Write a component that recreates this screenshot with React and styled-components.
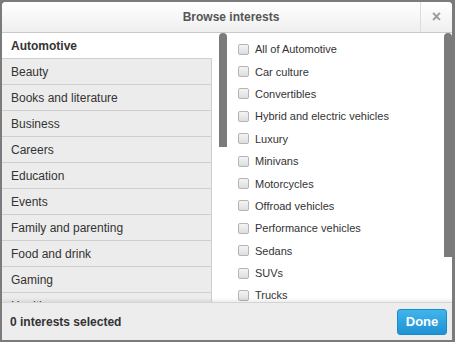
import React from 'react';
import styled, { createGlobalStyle } from 'styled-components';

const GlobalStyle = createGlobalStyle`
  html, body {
    margin: 0;
    padding: 0;
    background: #7b7b7b;
    font-family: "Liberation Sans", Arial, sans-serif;
  }
`;

const Page = styled.div`
  padding: 2px 3px 2px 2px;
  height: 342px;
  box-sizing: border-box;
`;

const Modal = styled.div`
  display: flex;
  flex-direction: column;
  height: 338px;
  background: #fff;
  border-radius: 4px 4px 0 0;
  overflow: hidden;
`;

const Header = styled.div`
  display: flex;
  height: 30px;
  flex-shrink: 0;
  background: linear-gradient(#ffffff, #efefef);
  border-bottom: 1px solid #c9c9c9;
`;

const Title = styled.div`
  flex: 1;
  display: flex;
  align-items: center;
  justify-content: center;
  padding-left: 40px;
  font-size: 12px;
  font-weight: bold;
  color: #555;
`;

const Close = styled.div`
  width: 31px;
  display: flex;
  align-items: center;
  justify-content: center;
  border-left: 1px solid #dcdcdc;
  color: #9a9a9a;
  font-size: 16px;
  font-weight: bold;
`;

const Body = styled.div`
  flex: 1;
  display: flex;
  overflow: hidden;
`;

const LeftCol = styled.div`
  display: flex;
  width: 225px;
`;

const CategoryList = styled.ul`
  list-style: none;
  margin: 0;
  padding: 0;
  width: 210px;
  border-right: 1px solid #cfcfcf;
  background: #ececec;
  align-self: flex-start;
`;

const Category = styled.li`
  height: 25px;
  display: flex;
  align-items: center;
  padding-left: 9px;
  font-size: 12px;
  color: #333;
  border-top: ${({ $first }) => ($first ? 'none' : '1px solid #cfcfcf')};
  background: ${({ $active }) => ($active ? '#fff' : '#ececec')};
  font-weight: ${({ $active }) => ($active ? 'bold' : 'normal')};
  margin-right: ${({ $active }) => ($active ? '-1px' : '0')};
`;

const Track = styled.div`
  width: 15px;
  display: flex;
  justify-content: flex-end;
`;

const Thumb = styled.div`
  width: 8px;
  height: ${({ $h }) => $h}px;
  background: #7b7b7b;
  border-radius: 4px 4px 0 0;
`;

const RightCol = styled.div`
  flex: 1;
  display: flex;
`;

const Options = styled.div`
  flex: 1;
  padding: 5px 0 0 11px;
`;

const Option = styled.label`
  display: flex;
  align-items: center;
  height: 22.4px;
  font-size: 11px;
  color: #333;
`;

const Box = styled.span`
  width: 9px;
  height: 9px;
  margin-right: 6px;
  border: 1px solid #b4b4b4;
  border-radius: 2px;
  background: linear-gradient(#f4f4f4, #dedede);
`;

const Footer = styled.div`
  height: 37px;
  flex-shrink: 0;
  display: flex;
  align-items: center;
  justify-content: space-between;
  padding: 0 5px 0 8px;
  background: #ededed;
  border-top: 1px solid #d4d4d4;
  box-shadow: 0 -2px 3px rgba(0, 0, 0, 0.08);
  position: relative;
`;

const Count = styled.div`
  font-size: 12px;
  font-weight: bold;
  color: #333;
`;

const Done = styled.button`
  width: 50px;
  height: 26px;
  border: 1px solid #1b8ccb;
  border-radius: 3px;
  background: linear-gradient(#40b5ec, #1f92d4);
  color: #fff;
  font-family: inherit;
  font-size: 13px;
  font-weight: bold;
  padding: 0;
`;

const categories = [
  'Automotive', 'Beauty', 'Books and literature', 'Business', 'Careers',
  'Education', 'Events', 'Family and parenting', 'Food and drink', 'Gaming', 'Health',
];

const options = [
  'All of Automotive', 'Car culture', 'Convertibles', 'Hybrid and electric vehicles',
  'Luxury', 'Minivans', 'Motorcycles', 'Offroad vehicles', 'Performance vehicles',
  'Sedans', 'SUVs', 'Trucks',
];

const App = () => {
  return (
    <>
      <GlobalStyle />
      <Page>
        <Modal>
          <Header>
            <Title>Browse interests</Title>
            <Close>×</Close>
          </Header>
          <Body>
            <LeftCol>
              <CategoryList>
                {categories.map((c, i) => (
                  <Category key={c} $first={i === 0} $active={i === 0}>{c}</Category>
                ))}
              </CategoryList>
              <Track><Thumb $h={114} /></Track>
            </LeftCol>
            <RightCol>
              <Options>
                {options.map((o) => (
                  <Option key={o}><Box />{o}</Option>
                ))}
              </Options>
              <Track><Thumb $h={224} /></Track>
            </RightCol>
          </Body>
          <Footer>
            <Count>0 interests selected</Count>
            <Done>Done</Done>
          </Footer>
        </Modal>
      </Page>
    </>
  );
};

export default App;
